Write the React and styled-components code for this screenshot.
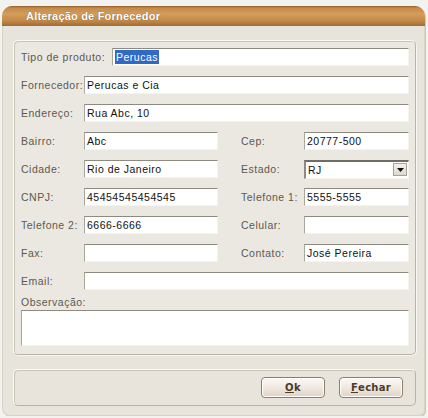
import React from "react";
import styled, { createGlobalStyle } from "styled-components";

const GlobalStyle = createGlobalStyle`
  body {
    margin: 0;
    background: #f3f2ee;
    font-family: "Liberation Sans", Arial, sans-serif;
  }
`;

function App() {
  return (
    <>
      <GlobalStyle />
      <Window>
        <TitleBar>Alteração de Fornecedor</TitleBar>
        <Body>
          <Panel>
            <Row>
              <Label $width={91}>Tipo de produto:</Label>
              <Input $flex>
                <Selected>Perucas</Selected>
              </Input>
            </Row>
            <Row>
              <Label>Fornecedor:</Label>
              <Input $flex>Perucas e Cia</Input>
            </Row>
            <Row>
              <Label>Endereço:</Label>
              <Input $flex>Rua Abc, 10</Input>
            </Row>
            <Row>
              <Label>Bairro:</Label>
              <Input $width={134}>Abc</Input>
              <Label $right>Cep:</Label>
              <Input $flex>20777-500</Input>
            </Row>
            <Row>
              <Label>Cidade:</Label>
              <Input $width={134}>Rio de Janeiro</Input>
              <Label $right>Estado:</Label>
              <Select>
                <span>RJ</span>
                <DropButton>
                  <svg width="7" height="4" viewBox="0 0 7 4">
                    <path d="M0 0h7L3.5 4z" fill="#111" />
                  </svg>
                </DropButton>
              </Select>
            </Row>
            <Row>
              <Label>CNPJ:</Label>
              <Input $width={134}>45454545454545</Input>
              <Label $right>Telefone 1:</Label>
              <Input $flex>5555-5555</Input>
            </Row>
            <Row>
              <Label>Telefone 2:</Label>
              <Input $width={134}>6666-6666</Input>
              <Label $right>Celular:</Label>
              <Input $flex />
            </Row>
            <Row>
              <Label>Fax:</Label>
              <Input $width={134} />
              <Label $right>Contato:</Label>
              <Input $flex>José Pereira</Input>
            </Row>
            <Row>
              <Label>Email:</Label>
              <Input $flex />
            </Row>
            <NoteLabel>Observação:</NoteLabel>
            <TextArea />
          </Panel>
          <ButtonBar>
            <Button>
              <u>O</u>k
            </Button>
            <Button>
              <u>F</u>echar
            </Button>
          </ButtonBar>
        </Body>
      </Window>
    </>
  );
}

const Window = styled.div`
  margin: 6px 0 0 2px;
  width: 423px;
  height: 410px;
  background: #e7e4db;
  border-radius: 10px 10px 6px 8px;
  box-shadow: inset 0 0 0 1px #d6d2c6, 1px 1px 0 #cfcbc0;
  display: flex;
  flex-direction: column;
`;

const TitleBar = styled.div`
  height: 20px;
  border-radius: 10px 10px 0 0;
  background: linear-gradient(
    to bottom,
    #8f5e2c 0,
    #c48a48 2px,
    #d49d5c 8px,
    #c28847 15px,
    #9e6a36 20px
  );
  color: #fff;
  font-family: "Liberation Sans", Arial, sans-serif;
  font-size: 11px;
  font-weight: bold;
  letter-spacing: 0.2px;
  padding-left: 24px;
  line-height: 20px;
  text-shadow: 0 0 1px #7a4d20;
`;

const Body = styled.div`
  flex: 1;
  padding: 14px 9px 10px 11px;
  display: flex;
  flex-direction: column;
  gap: 14px;
`;

const Panel = styled.div`
  height: 315px;
  box-sizing: border-box;
  border: 1px solid #fbfaf6;
  border-bottom-color: #b8b3a6;
  border-right-color: #b8b3a6;
  box-shadow: inset 1px 1px 0 #c8c4b8, 1px 1px 0 #f6f5f0;
  border-radius: 5px;
  background: #ebe8e1;
  padding: 7px 6px 0 7px;
  display: flex;
  flex-direction: column;
`;

const Row = styled.div`
  display: flex;
  align-items: center;
  height: 18px;
  margin-bottom: 10px;
`;

const Label = styled.span`
  width: ${(p) => p.$width || 63}px;
  margin-left: ${(p) => (p.$right ? 23 : 0)}px;
  flex-shrink: 0;
  font-size: 10.5px;
  letter-spacing: 0.5px;
  color: #5c594f;
  white-space: nowrap;
`;

const Input = styled.div`
  ${(p) => (p.$flex ? "flex: 1;" : `width: ${p.$width}px;`)}
  height: 18px;
  box-sizing: border-box;
  background: #fff;
  border-top: 1px solid #8d8a80;
  border-left: 1px solid #a9a69c;
  border-bottom: 1px solid #f4f3ee;
  border-right: 1px solid #f4f3ee;
  font-size: 10.5px;
  letter-spacing: 0.5px;
  color: #111;
  padding: 0 2px;
  display: flex;
  align-items: center;
`;

const Selected = styled.span`
  background: #3169c6;
  color: #fff;
  padding: 0 1px;
  line-height: 14px;
`;

const Select = styled(Input)`
  flex: 1;
  height: 19px;
  justify-content: space-between;
  padding-right: 1px;
  border-top: 2px solid #6f6c64;
  border-left: 2px solid #8d8a80;
`;

const DropButton = styled.span`
  width: 14px;
  height: 13px;
  background: linear-gradient(#f4f2ec, #dcd8cd);
  border: 1px solid #a7a396;
  box-sizing: border-box;
  display: flex;
  align-items: center;
  justify-content: center;
`;

const NoteLabel = styled.span`
  font-size: 10.5px;
  letter-spacing: 0.5px;
  color: #5c594f;
  margin-top: -4px;
  height: 14px;
  line-height: 12px;
`;

const TextArea = styled.div`
  height: 36px;
  background: #fff;
  box-sizing: border-box;
  border-top: 1px solid #8d8a80;
  border-left: 1px solid #a9a69c;
  border-bottom: 1px solid #f4f3ee;
  border-right: 1px solid #f4f3ee;
`;

const ButtonBar = styled.div`
  height: 37px;
  box-sizing: border-box;
  border: 1px solid #fbfaf6;
  border-bottom-color: #b8b3a6;
  border-right-color: #b8b3a6;
  box-shadow: inset 1px 1px 0 #c8c4b8;
  border-radius: 5px;
  background: #e8e4dc;
  display: flex;
  align-items: center;
  justify-content: flex-end;
  gap: 14px;
  padding-right: 12px;
`;

const Button = styled.div`
  width: 64px;
  height: 21px;
  box-sizing: border-box;
  border: 1px solid #8b7e6d;
  border-radius: 4px;
  background: linear-gradient(#fbf9f6, #efe7de 55%, #e0d3c4);
  box-shadow: inset 0 0 0 1px #fff;
  display: flex;
  align-items: center;
  justify-content: center;
  font-family: "DejaVu Sans", Verdana, sans-serif;
  font-size: 10px;
  font-weight: bold;
  color: #4b3b2a;
  letter-spacing: 0.3px;
`;

export default App;
